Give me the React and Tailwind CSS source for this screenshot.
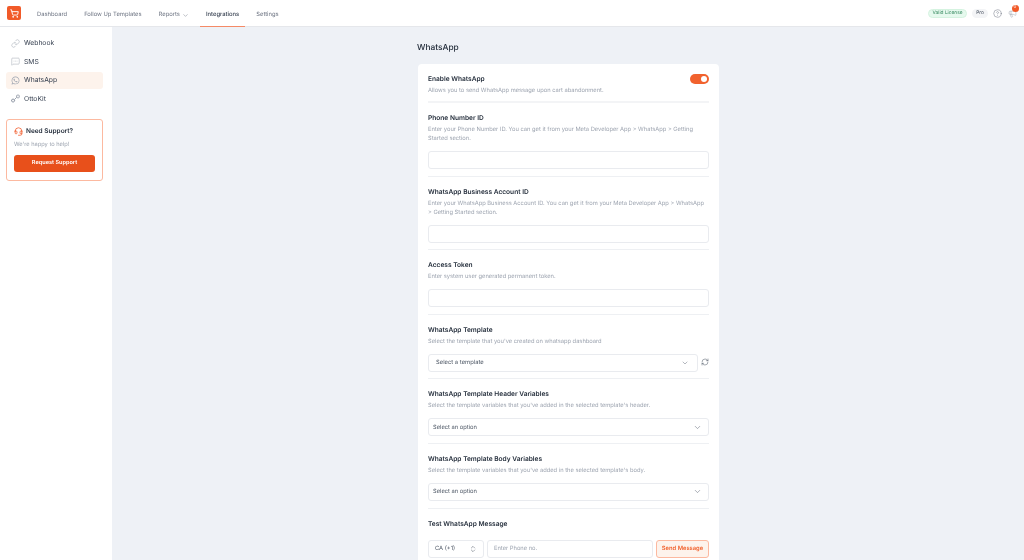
import React from "react";
import { Link, MessageSquareMore, Headset, ShoppingCart, CircleHelp, Megaphone, ChevronDown, RefreshCw, ChevronsUpDown } from "lucide-react";
import { FaWhatsapp } from "react-icons/fa";

const Label = ({ children }) => (
  <div className="text-[6.6px] leading-[11px] font-semibold text-[#1f2937]">{children}</div>
);
const Desc = ({ children }) => (
  <div className="mt-px text-[5.75px] leading-[9px] text-[#9ca3af]">{children}</div>
);
const Section = ({ title, desc, children, last }) => (
  <div className={`pt-[10px] ${last ? "" : "pb-[6.6px] border-b border-[#eef0f3]"}`}>
    <Label>{title}</Label>
    {desc && <Desc>{desc}</Desc>}
    {children}
  </div>
);
const Input = () => <div className="mt-2 h-[18px] rounded-[3px] border border-[#e9ebef] bg-white" />;
const Select = ({ children }) => (
  <div className="mt-2 h-[18px] rounded-[3px] border border-[#e9ebef] bg-white flex items-center justify-between pl-[4px] pr-[6px] text-[5.75px] text-[#4b5563]">
    <span className="pt-px">{children}</span>
    <ChevronDown size={9} strokeWidth={1.5} className="text-[#6b7280]" />
  </div>
);
const NavLink = ({ children, active }) => (
  <div className={`relative h-full flex items-center gap-[2px] pt-[4px] px-[6px] text-[5.85px] ${active ? "text-[#374151] font-medium" : "text-[#6b7280]"}`}>
    {children}
    {active && <span className="absolute left-0 right-0 -bottom-px h-px bg-[#f58a66]" />}
  </div>
);
const SideItem = ({ icon, label, active }) => (
  <div className={`h-[17.5px] flex items-center gap-[4px] pl-[4px] rounded-[3px] text-[6.75px] text-[#374151] ${active ? "bg-[#fdf3ec]" : ""}`}>
    <span className="w-[10px] flex justify-center text-[#9ca3af]">{icon}</span>
    {label}
  </div>
);

export default function App() {
  return (
    <div className="h-[560px] w-[1024px] overflow-hidden bg-[#eef1f6] flex flex-col antialiased [will-change:transform] [text-rendering:geometricPrecision] font-['Inter','Liberation_Sans',sans-serif]">
      <header className="h-[27px] shrink-0 bg-white border-b border-[#e5e7eb] flex items-center">
        <div className="ml-[7px] w-[14px] h-[14px] rounded-[2px] bg-[#f15a29] flex items-center justify-center">
          <ShoppingCart size={9} className="text-white" strokeWidth={2.5} />
        </div>
        <nav className="h-full ml-[10px] flex items-center">
          <div className="h-full flex gap-[5px]">
            <NavLink>Dashboard</NavLink>
            <NavLink>Follow Up Templates</NavLink>
            <NavLink>Reports <ChevronDown size={7} strokeWidth={1.5} /></NavLink>
            <NavLink active>Integrations</NavLink>
            <NavLink>Settings</NavLink>
          </div>
        </nav>
        <div className="ml-auto flex items-center mr-[7px]">
          <span className="h-[9px] w-[39px] pt-px rounded-full bg-[#e6f9ee] border border-[#d5f3e0] flex items-center justify-center text-[4.8px] text-[#2f855a]">Valid License</span>
          <span className="ml-[5px] h-[9px] w-[16px] pt-px rounded-full bg-[#f3f4f6] flex items-center justify-center text-[4.8px] text-[#374151]">Pro</span>
          <CircleHelp size={9} strokeWidth={1.3} className="ml-[5px] text-[#6b7280]" />
          <div className="relative ml-[6px]">
            <Megaphone size={9} strokeWidth={1.3} className="text-[#9ca3af]" />
            <span className="absolute -top-[3.5px] left-[3.5px] w-[7px] h-[7px] rounded-full bg-[#f15a29] text-white text-[4.5px] flex items-center justify-center">0</span>
          </div>
        </div>
      </header>
      <div className="flex flex-1 min-h-0">
        <aside className="w-[112px] shrink-0 bg-white pl-[6px] pr-[9px] pt-[7.5px]">
          <SideItem icon={<Link size={9} strokeWidth={1.3} />} label="Webhook" />
          <div className="mt-px" />
          <SideItem icon={<MessageSquareMore size={9} strokeWidth={1.3} />} label="SMS" />
          <div className="mt-px" />
          <SideItem active icon={<FaWhatsapp size={9} />} label="WhatsApp" />
          <div className="mt-px" />
          <SideItem icon={
            <svg width="9" height="9" viewBox="0 0 24 24" fill="none" stroke="currentColor" strokeWidth="2.6"><rect x="2" y="14" width="7" height="7" rx="1.5" transform="rotate(45 5.5 17.5)"/><rect x="15" y="3" width="7" height="7" rx="1.5"/><path d="M9 15l6-6"/></svg>
          } label="OttoKit" />
          <div className="mt-[11.5px] h-[62px] rounded-[3px] border border-[#fcb9a0] px-[7px] pt-[7px]">
            <div className="flex items-center gap-[3px] text-[6.5px] font-semibold text-[#1f2937]">
              <Headset size={9} strokeWidth={2} className="text-[#f15a29]" />
              Need Support?
            </div>
            <div className="mt-[3px] text-[5.7px] text-[#9ca3af] leading-[9px]">We're happy to help!</div>
            <div className="mt-[6px] h-[17px] rounded-[3px] bg-[#e8501b] text-white text-[5.6px] font-semibold flex items-center justify-center">Request Support</div>
          </div>
        </aside>
        <main className="flex-1 flex flex-col pl-[306px] pt-[15px]">
          <h1 className="h-[12px] -ml-px flex items-center text-[8.4px] font-medium text-[#1f2937]">WhatsApp</h1>
          <div className="mt-[10px] w-[301px] rounded-[4px] bg-white px-[10px]">
            <div className="pt-[10px] pb-[6px] border-b-2 border-[#f3f4f6] relative">
              <Label>Enable WhatsApp</Label>
              <Desc>Allows you to send WhatsApp message upon cart abandonment.</Desc>
              <div className="absolute right-0 top-[10px] w-[19px] h-[10px] rounded-full bg-[#f1622e] flex items-center justify-end pr-[2px]">
                <span className="w-[6px] h-[6px] rounded-full bg-white" />
              </div>
            </div>
            <Section title="Phone Number ID" desc="Enter your Phone Number ID. You can get it from your Meta Developer App > WhatsApp > Getting Started section."><Input /></Section>
            <Section title="WhatsApp Business Account ID" desc="Enter your WhatsApp Business Account ID. You can get it from your Meta Developer App > WhatsApp > Getting Started section."><Input /></Section>
            <Section title="Access Token" desc="Enter system user generated permanent token."><Input /></Section>
            <Section title="WhatsApp Template" desc="Select the template that you've created on whatsapp dashboard">
              <div className="flex items-center gap-[3px]">
                <div className="flex-1 mt-2 h-[18px] rounded-[3px] border border-[#e9ebef] flex items-center justify-between pl-[7px] pr-[8px] text-[5.85px] text-[#4b5563]">
                  <span className="pt-px">Select a template</span>
                  <ChevronDown size={8} strokeWidth={1.5} className="text-[#6b7280]" />
                </div>
                <RefreshCw size={8} strokeWidth={1.5} className="mt-[6px] text-[#4b5563]" />
              </div>
            </Section>
            <Section title="WhatsApp Template Header Variables" desc="Select the template variables that you've added in the selected template's header."><Select>Select an option</Select></Section>
            <Section title="WhatsApp Template Body Variables" desc="Select the template variables that you've added in the selected template's body."><Select>Select an option</Select></Section>
            <Section last title="Test WhatsApp Message">
              <div className="mt-[10px] flex gap-[3px] h-[18px]">
                <div className="w-[56px] rounded-[3px] border border-[#e9ebef] flex items-center justify-between pl-[6px] pr-[6px] text-[5.8px] text-[#4b5563]">
                  <span className="pt-px">CA (+1)</span>
                  <ChevronsUpDown size={8} strokeWidth={1.5} />
                </div>
                <div className="flex-1 rounded-[3px] pt-px border border-[#e9ebef] flex items-center pl-[6px] text-[5.75px] text-[#9ca3af]">Enter Phone no.</div>
                <div className="w-[53px] rounded-[3px] pt-px border border-[#fcb9a0] bg-[#fdf3ec] flex items-center justify-center text-[5.8px] font-semibold text-[#f1622e]">Send Message</div>
              </div>
              <div className="h-[20px]" />
            </Section>
          </div>
        </main>
      </div>
    </div>
  );
}
